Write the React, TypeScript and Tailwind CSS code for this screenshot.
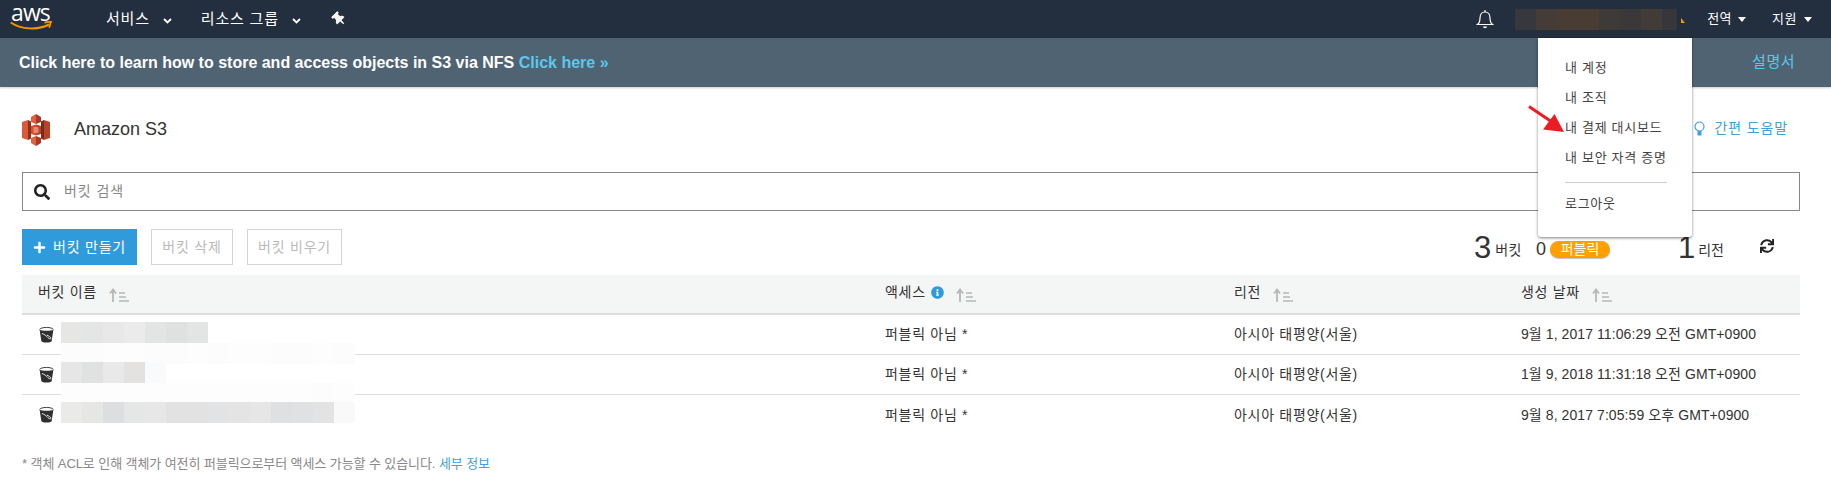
import { FaInfoCircle, FaPlus, FaSearch, FaSync, FaThumbtack } from "react-icons/fa";

const fontStack = "font-['Liberation_Sans','Noto_Sans_CJK_KR',sans-serif]";

const buckets = [
  { date: "9월 1, 2017 11:06:29 오전 GMT+0900" },
  { date: "1월 9, 2018 11:31:18 오전 GMT+0900" },
  { date: "9월 8, 2017 7:05:59 오후 GMT+0900" },
];

// blurred-out bucket names, one mosaic per row
const mosaics = [
  [
    ["#e6e6e4", "#e4e5e5", "#e8e8e8", "#ebebeb", "#e3e4e4", "#dfe1e0", "#e3e4e4"],
    ["#fcfcfc", "#fcfcfc", "#fdfdfd", "#fdfdfd", "#fcfcfc", "#fcfcfc", "#fdfdfd", "#fcfcfc", "#fdfdfd", "#fdfdfd", "#fcfcfc", "#fcfcfc", "#fdfdfd", "#fcfcfc"],
  ],
  [
    ["#e6e6e6", "#e0e2e1", "#e9e9e9", "#e3e2e0", "#f9fafb"],
    ["#fdfdfd", "#fdfdfd", "#fdfdfd", "#fdfdfd", "#fdfdfd", "#fdfdfd", "#fdfdfd", "#fdfdfd", "#fdfdfd", "#fdfdfd", "#fdfdfd", "#fdfdfd", "#fcfcfc", "#fdfdfd"],
  ],
  [
    ["#eaeae8", "#e6e6e5", "#dddee0", "#e5e6e6", "#e7e7e7", "#e2e2e2", "#e2e2e2", "#e2e3e4", "#e4e4e5", "#e6e6e6", "#dfe0e1", "#e0e1e2", "#e3e3e3", "#f9f9f9"],
  ],
];

const accountBlur = ["#36383d", "#453c37", "#483c33", "#483c33", "#3e3a38", "#3a3839", "#433b37"];

function Chevron({ className }: { className?: string }) {
  return (
    <svg className={className} width="9" height="6" viewBox="0 0 9 6" fill="none" stroke="currentColor" strokeWidth="1.8">
      <path d="M1 1l3.5 3.5L8 1" />
    </svg>
  );
}

function Caret({ className }: { className?: string }) {
  return (
    <svg className={className} width="8" height="5" viewBox="0 0 8 5" fill="currentColor">
      <path d="M0 0h8L4 5z" />
    </svg>
  );
}

function SortIcon() {
  return (
    <svg className="ml-[12px] mt-[6px] shrink-0" width="20" height="14" viewBox="0 0 20 14" fill="none">
      <path d="M4 14V3M1 5.500L4 1.500l3 4" stroke="#b4b8b8" strokeWidth="1.800" />
      <path d="M10 5h6M10 9h7M10 13h10" stroke="#b4b8b8" strokeWidth="1.500" />
    </svg>
  );
}

function BucketIcon() {
  return (
    <svg className="shrink-0" width="15" height="16" viewBox="0 0 15 16">
      <path d="M.8 2.600C.8 1.300 3.800.5 7.500.5s6.700.8 6.700 2.100" fill="none" stroke="#2f2f2f" strokeWidth="1" />
      <path d="M.6 2.800c2 1.400 11.800 1.400 13.800 0l-1.800 11.500c-.6 1.600-9.600 1.600-10.200 0z" fill="#2f2f2f" />
      <path d="M3 6.500c2 .5 4.500 2.500 6 4.200 1.200 1.300 3.200 1.400 3 .4-.3-1-2.200-2.200-4.200-3" fill="none" stroke="#e8e8e8" strokeWidth="1" />
    </svg>
  );
}

function S3Logo() {
  return (
    <svg className="shrink-0" width="28" height="32" viewBox="0 0 28 32">
      <path d="M0 8l6-2v20l-6-2z" fill="#dc5a3c" />
      <path d="M6 6l3 1.500v17L6 26z" fill="#8c2f1c" />
      <path d="M28 8l-6-2v20l6-2z" fill="#b8432a" />
      <path d="M22 6l-3 1.500v17l3 1.500z" fill="#7f2a19" />
      <path d="M9 3l5-3v10l-5-2z" fill="#e0603f" />
      <path d="M19 3l-5-3v10l5-2z" fill="#a93a22" />
      <path d="M9 24l5-2v10l-5-3z" fill="#e0603f" />
      <path d="M19 24l-5-2v10l5-3z" fill="#a93a22" />
      <path d="M9 12l5-1.500v11L9 20z" fill="#d4512f" />
      <path d="M19 12l-5-1.500v11l5-1.500z" fill="#b3432a" />
      <path d="M11.500 13.500l2.500-.8 2.500.8v5l-2.500.8-2.500-.8z" fill="#e58a72" />
    </svg>
  );
}

export default function App() {
  return (
    <div className={`relative h-[481px] w-[1831px] overflow-hidden bg-white ${fontStack}`}>
      {/* top nav */}
      <div className="flex h-[38px] items-center bg-[#232f3e] text-white">
        <div className="relative ml-[10px] h-[38px] w-[43px] shrink-0">
          <span className="absolute left-[1px] top-0 font-['Open_Sans',sans-serif] text-[23px] leading-[24px] tracking-[-0.9px]">aws</span>
          <svg className="absolute left-0 top-[21px]" width="43" height="10" viewBox="0 0 43 10" fill="none">
            <path d="M.7 1.500C11 8.500 28 9.500 39 3.500" stroke="#f79400" strokeWidth="2" />
            <path d="M34.500 1.500l6.500-.8-1.800 6" stroke="#f79400" strokeWidth="1.800" />
          </svg>
        </div>
        <span className="ml-[53px] text-[15px] tracking-[0.8px]">서비스</span>
        <Chevron className="ml-[13px] mt-[3px]" />
        <span className="ml-[29px] text-[15px] tracking-[0.8px]">리소스 그룹</span>
        <Chevron className="ml-[13px] mt-[3px]" />
        <FaThumbtack className="ml-[31px] -rotate-45 text-[14px] text-[#f5f5f5]" />
        <svg className="ml-auto" width="18" height="20" viewBox="0 0 18 20" fill="none" stroke="#fff" strokeWidth="1.200">
          <path d="M1.500 15.500c2-1.500 2.500-3.500 2.500-6.500 0-3.500 2-6 5-6s5 2.500 5 6c0 3 .5 5 2.500 6.500z" />
          <path d="M7.500 17.500c.5 1.200 2.500 1.200 3 0" strokeWidth="1.500" />
          <path d="M9 1v2" />
        </svg>
        <div className="ml-[21px] flex h-[21px]">
          {accountBlur.map((c, i) => (
            <div key={i} className="h-[21px] w-[21px]" style={{ backgroundColor: c }} />
          ))}
          <div className="h-[21px] w-[15px] bg-[#36363b]" />
        </div>
        <Caret className="mt-[2px] rotate-180 text-[#f79400] [clip-path:polygon(0_0,50%_0,50%_100%,0_100%)]" />
        <span className="ml-[22px] text-[13px] tracking-[0.5px]">전역</span>
        <Caret className="ml-[6px] mt-[1px]" />
        <span className="ml-[26px] text-[13px] tracking-[0.5px]">지원</span>
        <Caret className="ml-[7px] mr-[19px] mt-[1px]" />
      </div>

      {/* banner */}
      <div className="flex h-[49px] items-center justify-between bg-[#4f6373] pl-[19px] pr-[36px] shadow-[0_1px_2px_rgba(0,0,0,0.2)]">
        <span className="text-[16px] font-bold text-white">
          Click here to learn how to store and access objects in S3 via NFS{" "}
          <span className="text-[#5bc8ec]">Click here »</span>
        </span>
        <span className="text-[15px] tracking-[0.5px] text-[#5bc8ec]">설명서</span>
      </div>

      {/* content */}
      <div className="pl-[22px] pr-[31px]">
        <div className="flex h-[85px] items-center">
          <S3Logo />
          <span className="ml-[24px] text-[18px] text-[#333]">Amazon S3</span>
          <div className="ml-auto mr-[12px] mb-[2px] flex items-center text-[14px] tracking-[0.85px] text-[#3f9fd8]">
            <svg width="11" height="16" viewBox="0 0 11 16" fill="none">
              <circle cx="5.500" cy="5.500" r="4.500" stroke="#3f9fd8" strokeWidth="1.200" />
              <path d="M3.500 10h4v4.500h-4z" fill="#3f9fd8" />
            </svg>
            <span className="ml-[10px]">간편 도움말</span>
          </div>
        </div>

        <div className="flex h-[39px] items-center border border-[#888] pl-[11px]">
          <FaSearch className="text-[16px] text-[#222]" />
          <span className="ml-[14px] text-[14px] tracking-[0.95px] text-[#888]">버킷 검색</span>
        </div>

        <div className="relative mt-[18px] flex h-[36px] items-stretch text-[14px] tracking-[0.8px]">
          <div className="flex w-[115px] items-center justify-center gap-[7px] bg-[#2f9bdb] text-white">
            <FaPlus className="text-[13px]" />
            버킷 만들기
          </div>
          <div className="ml-[14px] flex w-[82px] items-center justify-center border border-[#d5d5d5] text-[#bbb]">버킷 삭제</div>
          <div className="ml-[14px] flex w-[95px] items-center justify-center border border-[#d5d5d5] text-[#bbb]">버킷 비우기</div>

          <div className="ml-auto mr-[26px] flex items-center tracking-normal text-[#333]">
            <span className="text-[31px] leading-none">3</span>
            <span className="ml-[4px] mt-[6px] text-[14px] tracking-[0.5px]">버킷</span>
            <span className="ml-[14px] mt-[4px] text-[18px] leading-none">0</span>
            <span className="ml-[4px] mt-[4px] flex h-[17px] w-[60px] items-center justify-center rounded-[9px] bg-[#ff9f00] text-[14px] text-white shadow-[0_1px_1px_rgba(0,0,0,0.25)]">퍼블릭</span>
            <span className="ml-[68px] text-[31px] leading-none">1</span>
            <span className="ml-[3px] mt-[6px] text-[14px]">리전</span>
            <FaSync className="ml-[36px] mt-[-2px] text-[14px] text-[#222]" />
          </div>
        </div>

        {/* bucket table */}
        <div className="mt-[10px] grid grid-cols-[847px_349px_287px_1fr] text-[14px] tracking-[0.7px] text-[#333]">
          <div className="col-span-4 grid h-[40px] grid-cols-subgrid border-b-2 border-[#ddd] bg-[#f4f6f6]">
            <div className="flex items-center pb-[4px] pl-[16px]">버킷 이름<SortIcon /></div>
            <div className="flex items-center pb-[4px] pl-[16px]">
              액세스
              <FaInfoCircle className="ml-[5px] text-[13px] text-[#2f9bdb]" />
              <SortIcon />
            </div>
            <div className="flex items-center pb-[4px] pl-[16px]">리전<SortIcon /></div>
            <div className="flex items-center pb-[4px] pl-[16px]">생성 날짜<SortIcon /></div>
          </div>
          {buckets.map((b, i) => (
            <div key={i} className={`col-span-4 grid h-[40px] grid-cols-subgrid items-center ${i < 2 ? "border-b border-[#ddd]" : ""}`}>
              <div className="relative flex h-full items-center pl-[17px]">
                <BucketIcon />
                <div className="absolute left-[39px] top-[7px] flex flex-col">
                  {mosaics[i].map((row, r) => (
                    <div key={r} className="flex">
                      {row.map((c, k) => (
                        <div key={k} className="h-[21px] w-[21px]" style={{ backgroundColor: c }} />
                      ))}
                    </div>
                  ))}
                </div>
              </div>
              <div className="pl-[16px]">퍼블릭 아님 *</div>
              <div className="pl-[16px]">아시아 태평양(서울)</div>
              <div className="pl-[16px] tracking-[0.08px]">{b.date}</div>
            </div>
          ))}
        </div>

        <p className="mt-[19px] text-[13px] tracking-[-0.08px] text-[#888]">
          * 객체 ACL로 인해 객체가 여전히 퍼블릭으로부터 액세스 가능할 수 있습니다. <span className="text-[#3f9fd8]">세부 정보</span>
        </p>
      </div>

      {/* account dropdown */}
      <div className="absolute left-[1538px] top-[38px] h-[199px] w-[154px] rounded-b-[3px] bg-white pl-[27px] pt-[15px] text-[13px] tracking-[0.7px] text-[#444] shadow-[0_1px_3px_rgba(0,0,0,0.5)]">
        <div className="flex h-[30px] items-center">내 계정</div>
        <div className="flex h-[30px] items-center">내 조직</div>
        <div className="flex h-[30px] items-center">내 결제 대시보드</div>
        <div className="flex h-[30px] items-center">내 보안 자격 증명</div>
        <div className="mt-[9px] h-px w-[102px] bg-[#ccc]" />
        <div className="mt-[6px] flex h-[30px] items-center">로그아웃</div>
      </div>

      {/* annotation arrow */}
      <svg className="absolute left-[1526px] top-[104px]" width="40" height="30" viewBox="0 0 40 30">
        <path d="M3 2.500L26 18" stroke="#ed1c24" strokeWidth="3" />
        <path d="M38 28L17 25.500 28.500 10z" fill="#ed1c24" />
      </svg>
    </div>
  );
}
